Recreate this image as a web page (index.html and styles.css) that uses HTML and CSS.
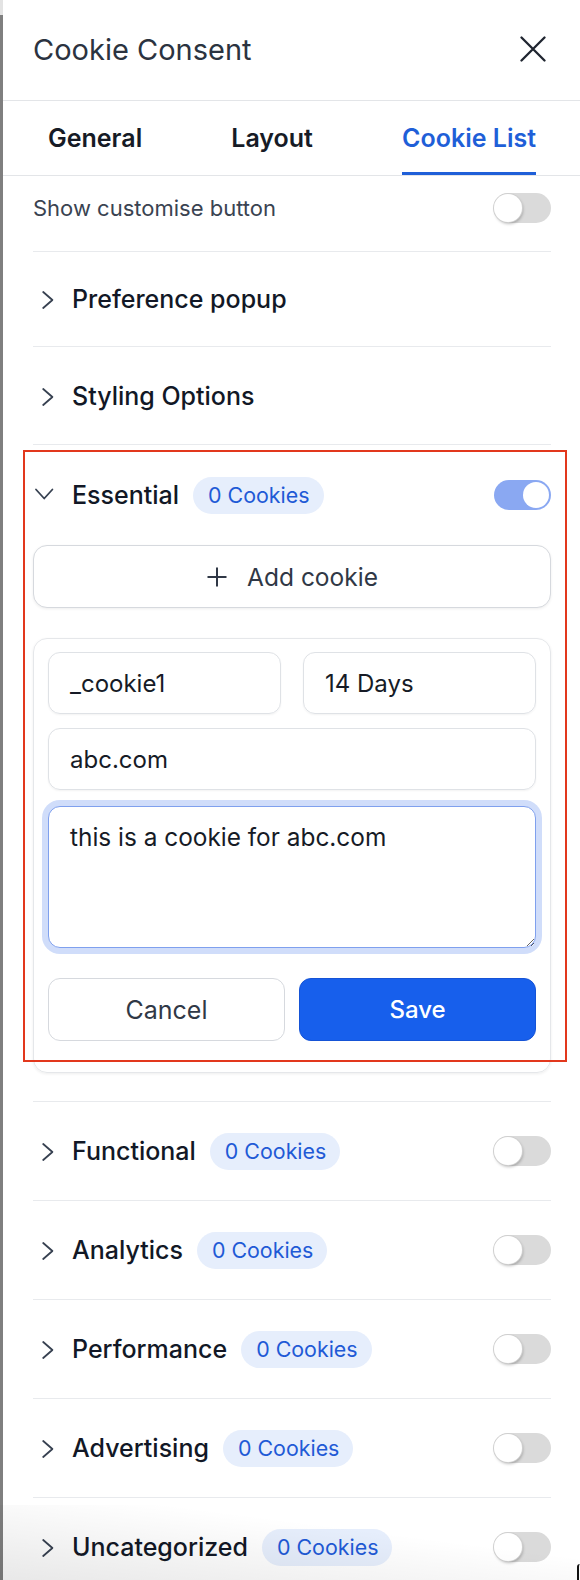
FILE: index.html
```html
<!DOCTYPE html>
<html lang="en">
<head>
<meta charset="utf-8">
<title>Cookie Consent</title>
<link rel="stylesheet" href="styles.css">
</head>
<body>
<div class="app">
  <div class="edge"></div>
  <div class="panel">
    <header class="head">
      <h1 class="title">Cookie Consent</h1>
      <button class="close" aria-label="Close">
        <svg width="26" height="26" viewBox="0 0 26 26"><path d="M1.5 1.5 L24.5 24.5 M24.5 1.5 L1.5 24.5" stroke="#1f2530" stroke-width="2.3" fill="none" stroke-linecap="round"/></svg>
      </button>
    </header>
    <nav class="tabs">
      <span class="tab">General</span>
      <span class="tab">Layout</span>
      <span class="tab active">Cookie List</span>
    </nav>
    <div class="body">
      <div class="row setting">
        <span class="setting-label">Show customise button</span>
        <span class="toggle"><span class="knob"></span></span>
      </div>
      <div class="row acc acc-pref">
        <svg class="chev" width="24" height="24" viewBox="0 0 24 24"><path d="M7.2 5 L16.4 13 L7.2 21" fill="none" stroke="#374151" stroke-width="1.8" stroke-linecap="round" stroke-linejoin="round"/></svg>
        <span class="acc-label">Preference popup</span>
      </div>
      <div class="row acc acc-style">
        <svg class="chev" width="24" height="24" viewBox="0 0 24 24"><path d="M7.2 5 L16.4 13 L7.2 21" fill="none" stroke="#374151" stroke-width="1.8" stroke-linecap="round" stroke-linejoin="round"/></svg>
        <span class="acc-label">Styling Options</span>
      </div>

      <section class="cat-open">
        <div class="cat-head">
          <svg class="chev" width="24" height="24" viewBox="0 0 24 24"><path d="M0 6.5 L8.2 15.5 L16.4 6.5" fill="none" stroke="#374151" stroke-width="1.8" stroke-linecap="round" stroke-linejoin="round"/></svg>
          <span class="acc-label">Essential</span>
          <span class="badge">0 Cookies</span>
          <span class="toggle on"><span class="knob"></span></span>
        </div>
        <button class="add-btn">
          <svg width="22" height="22" viewBox="0 0 22 22"><path d="M11 1.5 V20.5 M1.5 11 H20.5" stroke="#303846" stroke-width="2" fill="none"/></svg>
          <span>Add cookie</span>
        </button>
        <div class="form-card">
          <div class="form-row">
            <div class="field">_cookie1</div>
            <div class="field">14 Days</div>
          </div>
          <div class="field">abc.com</div>
          <textarea class="area">this is a cookie for abc.com</textarea>
          <div class="btn-row">
            <button class="btn cancel">Cancel</button>
            <button class="btn save">Save</button>
          </div>
        </div>
        <div class="highlight"></div>
      </section>

      <div class="row cat">
        <svg class="chev" width="24" height="24" viewBox="0 0 24 24"><path d="M7.2 5 L16.4 13 L7.2 21" fill="none" stroke="#374151" stroke-width="1.8" stroke-linecap="round" stroke-linejoin="round"/></svg>
        <span class="acc-label">Functional</span>
        <span class="badge">0 Cookies</span>
        <span class="toggle"><span class="knob"></span></span>
      </div>
      <div class="row cat">
        <svg class="chev" width="24" height="24" viewBox="0 0 24 24"><path d="M7.2 5 L16.4 13 L7.2 21" fill="none" stroke="#374151" stroke-width="1.8" stroke-linecap="round" stroke-linejoin="round"/></svg>
        <span class="acc-label">Analytics</span>
        <span class="badge">0 Cookies</span>
        <span class="toggle"><span class="knob"></span></span>
      </div>
      <div class="row cat">
        <svg class="chev" width="24" height="24" viewBox="0 0 24 24"><path d="M7.2 5 L16.4 13 L7.2 21" fill="none" stroke="#374151" stroke-width="1.8" stroke-linecap="round" stroke-linejoin="round"/></svg>
        <span class="acc-label">Performance</span>
        <span class="badge">0 Cookies</span>
        <span class="toggle"><span class="knob"></span></span>
      </div>
      <div class="row cat">
        <svg class="chev" width="24" height="24" viewBox="0 0 24 24"><path d="M7.2 5 L16.4 13 L7.2 21" fill="none" stroke="#374151" stroke-width="1.8" stroke-linecap="round" stroke-linejoin="round"/></svg>
        <span class="acc-label">Advertising</span>
        <span class="badge">0 Cookies</span>
        <span class="toggle"><span class="knob"></span></span>
      </div>
      <div class="row cat">
        <svg class="chev" width="24" height="24" viewBox="0 0 24 24"><path d="M7.2 5 L16.4 13 L7.2 21" fill="none" stroke="#374151" stroke-width="1.8" stroke-linecap="round" stroke-linejoin="round"/></svg>
        <span class="acc-label">Uncategorized</span>
        <span class="badge">0 Cookies</span>
        <span class="toggle"><span class="knob"></span></span>
      </div>
    </div>
  </div>
  <div class="bottom-fade"></div>
  <div class="corner"></div>
</div>
</body>
</html>
```
FILE: styles.css
```css
* { box-sizing: border-box; }
html, body { margin: 0; padding: 0; background: #fff; }
body {
  font-family: Inter, "Noto Sans", "Liberation Sans", sans-serif;
  color: #111827;
  width: 580px;
  height: 1580px;
  overflow: hidden;
}
.app { display: flex; position: relative; height: 1580px; overflow: hidden; }
.edge {
  width: 3px;
  flex: none;
  background: linear-gradient(#e3e3e3 0 15px, #7f7f7f 15px);
}
.panel { flex: 1; min-width: 0; background: #fff; }

.head {
  height: 101px;
  border-bottom: 1px solid #e3e5e8;
  display: flex;
  align-items: center;
  justify-content: space-between;
  padding: 0 34px 2px 30px;
}
.title {
  margin: 0;
  font-size: 29px;
  font-weight: 400;
  color: #2b3340;
  letter-spacing: 0;
}
.close {
  border: 0;
  background: none;
  padding: 0;
  width: 26px;
  height: 26px;
  display: flex;
}

.tabs {
  height: 75px;
  border-bottom: 1px solid #e3e5e8;
  display: flex;
  justify-content: space-between;
  padding: 0 44px 0 45px;
}
.tab {
  height: 74px;
  padding-top: 22px;
  line-height: 30px;
  font-size: 25px;
  font-weight: 600;
  color: #161b26;
  border-bottom: 3px solid transparent;
}
.tab.active { color: #1f5fd8; border-bottom-color: #1f5fd8; }

.body { padding: 0 29px 0 30px; }
.row {
  display: flex;
  align-items: center;
  border-bottom: 1px solid #e8eaed;
}
.setting { height: 76px; padding-bottom: 11px; justify-content: space-between; }
.setting-label { font-size: 22px; color: #3a4351; line-height: 28px; }
.acc-pref { height: 95px; }
.acc-style { height: 98px; }
.cat { height: 99px; }

.chev { flex: none; margin-left: 3px; margin-right: 12px; overflow: visible; }
.acc-label { font-size: 25px; font-weight: 500; color: #121826; line-height: 30px; }
.badge {
  margin-left: 14px;
  height: 37px;
  padding: 0 14px 0 15px;
  border-radius: 19px;
  background: #e6eefc;
  color: #1f5ad6;
  font-size: 21.4px;
  line-height: 37px;
}
.toggle {
  margin-left: auto;
  flex: none;
  width: 57px;
  height: 30px;
  border-radius: 15px;
  background: #dadada;
  position: relative;
}
.toggle .knob {
  position: absolute;
  left: 0;
  top: 1px;
  width: 28px;
  height: 28px;
  border-radius: 50%;
  background: #fff;
  box-shadow: 0 0 0 1px #d0d0d0, 1px 2px 3px rgba(0,0,0,0.25);
}
.toggle.on { background: #8aa8f2; }
.toggle.on .knob { left: auto; right: 2px; top: 2px; width: 26px; height: 26px; box-shadow: none; }

.cat-open {
  position: relative;
  border-bottom: 1px solid #e8eaed;
  padding-bottom: 28px;
}
.cat-head { height: 100px; display: flex; align-items: center; }
.add-btn {
  width: 100%;
  height: 63px;
  border: 1px solid #d6d9de;
  border-radius: 14px;
  background: #fff;
  box-shadow: 0 1px 3px rgba(0,0,0,0.07);
  display: flex;
  align-items: center;
  justify-content: center;
  gap: 19px;
  font-family: inherit;
  font-size: 24.5px;
  color: #303846;
  padding: 0;
}
.form-card {
  margin-top: 30px;
  border: 1px solid #e5e7ea;
  border-radius: 14px;
  box-shadow: 0 1px 3px rgba(0,0,0,0.07);
  padding: 13px 14px 31px;
  display: flex;
  flex-direction: column;
  gap: 14px;
}
.form-row { display: flex; gap: 22px; }
.form-row .field { flex: 1; }
.field {
  height: 62px;
  border: 1px solid #dfe2e6;
  border-radius: 12px;
  box-shadow: 0 1px 2px rgba(0,0,0,0.05);
  padding: 0 21px;
  display: flex;
  align-items: center;
  font-size: 24px;
  color: #161b26;
}
.area {
  margin-top: 2px;
  height: 142px;
  width: 100%;
  border: 1px solid #7fa0ee;
  border-radius: 12px;
  box-shadow: 0 0 0 6px #d0ddfa;
  padding: 15px 21px;
  font-family: inherit;
  font-size: 24.4px;
  line-height: 30px;
  color: #161b26;
  resize: both;
  outline: none;
  background: #fff;
}
.btn-row { display: flex; gap: 14px; margin-top: 16px; }
.btn {
  flex: 1;
  height: 63px;
  border-radius: 12px;
  font-family: inherit;
  font-size: 25px;
}
.cancel { background: #fff; border: 1px solid #d6d9de; color: #303846; }
.save { background: #175fec; border: 1px solid #1553d6; color: #fff; font-weight: 500; font-size: 24px; }

.highlight {
  position: absolute;
  left: -10px;
  right: -16px;
  top: 5px;
  height: 612px;
  border: 2.5px solid #e2381d;
  pointer-events: none;
}

.bottom-fade {
  position: absolute;
  left: 0;
  right: 0;
  bottom: 0;
  height: 75px;
  background: linear-gradient(to top right, rgba(0,0,0,0.09), rgba(0,0,0,0) 65%);
  pointer-events: none;
}
.corner {
  position: absolute;
  right: 0;
  bottom: 0;
  width: 3px;
  height: 16px;
  border-left: 2px solid #111;
  border-top-left-radius: 6px;
  pointer-events: none;
}
```
